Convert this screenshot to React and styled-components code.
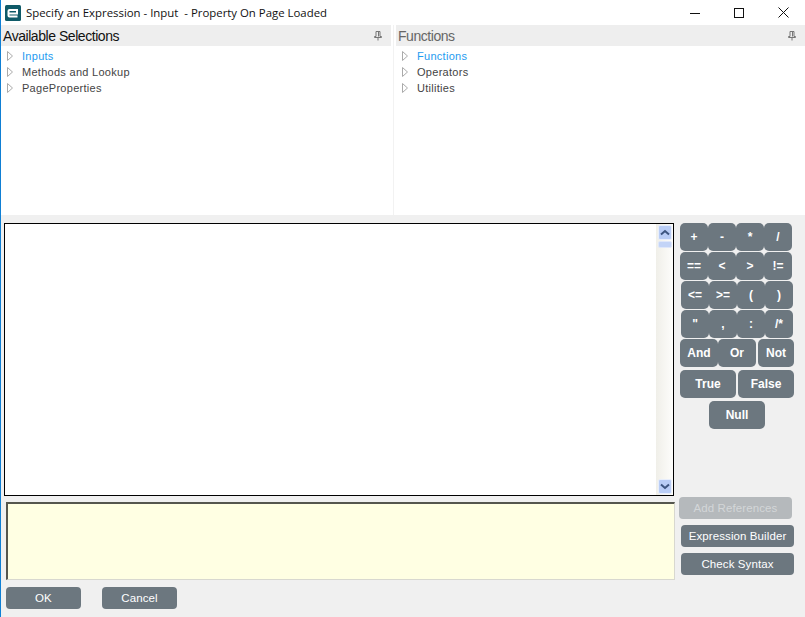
import styled, { createGlobalStyle } from 'styled-components';

const GlobalStyle = createGlobalStyle`
  html, body {
    margin: 0;
    padding: 0;
    background: #f0f0f0;
    overflow: hidden;
  }
`;

const Window = styled.div`
  width: 805px;
  height: 617px;
  box-sizing: border-box;
  border-left: 1px solid #0f7fd4;
  display: flex;
  flex-direction: column;
  background: #f0f0f0;
  font-family: 'Liberation Sans', Arial, sans-serif;
`;

const TitleBar = styled.div`
  height: 25px;
  flex: none;
  display: flex;
  align-items: center;
  background: #fff;
  padding-left: 4px;
`;

const AppLogo = styled.svg`
  width: 16px;
  height: 16px;
  margin-right: 5px;
`;

const TitleText = styled.span`
  flex: 1;
  font-family: 'Open Sans', sans-serif;
  font-size: 11.4px;
  color: #111;
  white-space: pre;
`;

const WindowButton = styled.button`
  width: 44px;
  height: 25px;
  padding: 0;
  border: none;
  background: transparent;
  display: flex;
  align-items: center;
  justify-content: center;
`;

const Panels = styled.div`
  height: 190px;
  flex: none;
  display: flex;
  background: #fff;
`;

const Panel = styled.section`
  width: ${(props) => props.$width}px;
  flex: none;
`;

const Splitter = styled.div`
  width: 3px;
  flex: none;
  box-sizing: border-box;
  margin-left: 2px;
  border-left: 1px solid #f2f2f2;
`;

const PanelHeader = styled.header`
  height: 21px;
  display: flex;
  align-items: center;
  justify-content: space-between;
  background: #eeeeee;
  padding: 0 9px 0 2px;
  font-size: 14px;
  letter-spacing: -0.45px;
  color: ${(props) => (props.$muted ? '#666' : '#111')};
`;

const Tree = styled.ul`
  list-style: none;
  margin: 0;
  padding: 2px 0 0 5px;
`;

const TreeRow = styled.li`
  height: 16px;
  display: flex;
  align-items: center;
  gap: 8px;
  font-size: 11px;
  letter-spacing: 0.28px;
  color: ${(props) => (props.$active ? '#1e9bf0' : '#444')};
`;

const Body = styled.div`
  flex: 1;
  display: flex;
  min-height: 0;
`;

const EditorColumn = styled.div`
  width: 674px;
  flex: none;
  padding-top: 8px;
  box-sizing: border-box;
`;

const Editor = styled.div`
  width: 670px;
  height: 273px;
  margin-left: 3px;
  box-sizing: border-box;
  border: 1px solid #000;
  background: #fff;
  display: flex;
  justify-content: flex-end;
`;

const ScrollBar = styled.div`
  width: 17px;
  padding: 1px 1px;
  box-sizing: border-box;
  background: linear-gradient(90deg, #f0efe9, #fdfdfb);
  display: flex;
  flex-direction: column;
  align-items: center;
`;

const ScrollButton = styled.div`
  width: 14px;
  height: 15px;
  flex: none;
  box-sizing: border-box;
  border: 1px solid #e8eefb;
  border-radius: 2px;
  background: #b9cdf6;
  display: flex;
  align-items: center;
  justify-content: center;
  margin-top: ${(props) => (props.$bottom ? 'auto' : '0')};
`;

const ScrollThumb = styled.div`
  width: 14px;
  height: 7px;
  margin-top: 1px;
  box-sizing: border-box;
  border: 1px solid #dfe7fa;
  border-radius: 2px;
  background: #c3d4f7;
`;

const Notes = styled.div`
  width: 669px;
  height: 78px;
  margin: 6px 0 0 5px;
  box-sizing: border-box;
  background: #ffffe3;
  border-style: solid;
  border-width: 2px 1px 1px 2px;
  border-color: #55564e #d8d8d0 #d8d8d0 #55564e;
`;

const SideColumn = styled.div`
  width: 130px;
  height: 360px;
  flex: none;
  padding-top: 8px;
  box-sizing: border-box;
  display: flex;
  flex-direction: column;
`;

const KeyRow = styled.div`
  display: flex;
  margin: ${(props) => props.$top || 0}px 0 0 ${(props) => props.$left || 0}px;
`;

const Key = styled.button`
  width: ${(props) => props.$width || 28}px;
  height: 28px;
  margin-left: ${(props) => props.$gap || 0}px;
  padding: 0;
  border: none;
  border-radius: 5px;
  background: #6c777f;
  color: #fff;
  font-family: inherit;
  font-size: 12px;
  font-weight: bold;
`;

const Actions = styled.div`
  margin-top: auto;
  display: flex;
  flex-direction: column;
  gap: 6px;
`;

const ActionButton = styled.button`
  width: 113px;
  height: 22px;
  padding: 0;
  margin-left: ${(props) => (props.disabled ? 4 : 6)}px;
  border: none;
  border-radius: 4px;
  background: ${(props) => (props.disabled ? '#b5b9bc' : '#6c777f')};
  color: ${(props) => (props.disabled ? '#d3d6d8' : '#fff')};
  font-family: inherit;
  font-size: 11.5px;
  letter-spacing: 0.1px;
`;

const Footer = styled.div`
  height: 37px;
  flex: none;
  box-sizing: border-box;
  padding: 7px 0 0 5px;
  display: flex;
  gap: 21px;
`;

const FooterButton = styled(ActionButton)`
  width: 75px;
  margin-left: 0;
`;

const Expander = () => (
  <svg width="8" height="10" viewBox="0 0 8 10">
    <path d="M1.5 .5 L6.5 5 L1.5 9.5 Z" fill="#fff" stroke="#aaa" />
  </svg>
);

const Pin = () => (
  <svg width="8" height="10" viewBox="0 0 8 10">
    <path d="M2 .5 H6 V5.5 H7.5 V6.5 H.5 V5.5 H2 Z M4 6.5 V9.5 M4.5 1 V5.5" fill="none" stroke="#777" />
  </svg>
);

const Chevron = ({ down }) => (
  <svg width="10" height="7" viewBox="0 0 10 7">
    <path d={down ? 'M1 1.5 L5 5 L9 1.5' : 'M1 5.5 L5 2 L9 5.5'} fill="none" stroke="#3d5580" strokeWidth="2" />
  </svg>
);

const keyRows = [
  { left: 0, top: 0, keys: ['+', '-', '*', '/'] },
  { left: 0, top: 1, keys: ['==', '<', '>', '!='] },
  { left: 1, top: 1, keys: ['<=', '>=', '(', ')'] },
  { left: 1, top: 1, keys: ['"', ',', ':', '/*'] },
];

const leftItems = ['Inputs', 'Methods and Lookup', 'PageProperties'];
const rightItems = ['Functions', 'Operators', 'Utilities'];

function TreeList({ items }) {
  return (
    <Tree>
      {items.map((item, i) => (
        <TreeRow key={item} $active={i === 0}>
          <Expander />
          {item}
        </TreeRow>
      ))}
    </Tree>
  );
}

export default function App() {
  return (
    <Window>
      <GlobalStyle />
      <TitleBar>
        <AppLogo viewBox="0 0 16 16">
          <rect width="16" height="16" rx="1.5" fill="#0f5a68" />
          <path d="M3.5 8.5 H12 V5 H4.5 Q3.5 5 3.5 6 V10.5 Q3.5 11.5 4.5 11.5 H12.5" fill="none" stroke="#fff" strokeWidth="2" />
        </AppLogo>
        <TitleText>Specify an Expression - Input  - Property On Page Loaded</TitleText>
        <WindowButton aria-label="Minimize">
          <svg width="10" height="10" viewBox="0 0 10 10">
            <path d="M0 5.5 H10" stroke="#111" />
          </svg>
        </WindowButton>
        <WindowButton aria-label="Maximize">
          <svg width="10" height="10" viewBox="0 0 10 10">
            <rect x=".5" y=".5" width="9" height="9" fill="none" stroke="#111" />
          </svg>
        </WindowButton>
        <WindowButton aria-label="Close">
          <svg width="11" height="11" viewBox="0 0 11 11">
            <path d="M.5 .5 L10.5 10.5 M10.5 .5 L.5 10.5" stroke="#111" />
          </svg>
        </WindowButton>
      </TitleBar>

      <Panels>
        <Panel $width={390}>
          <PanelHeader>
            Available Selections
            <Pin />
          </PanelHeader>
          <TreeList items={leftItems} />
        </Panel>
        <Splitter />
        <Panel $width={409}>
          <PanelHeader $muted>
            Functions
            <Pin />
          </PanelHeader>
          <TreeList items={rightItems} />
        </Panel>
      </Panels>

      <Body>
        <EditorColumn>
          <Editor>
            <ScrollBar>
              <ScrollButton>
                <Chevron />
              </ScrollButton>
              <ScrollThumb />
              <ScrollButton $bottom>
                <Chevron down />
              </ScrollButton>
            </ScrollBar>
          </Editor>
          <Notes />
        </EditorColumn>
        <SideColumn>
          {keyRows.map((row) => (
            <KeyRow key={row.keys[0]} $left={5 + row.left} $top={row.top}>
              {row.keys.map((k) => (
                <Key key={k}>{k}</Key>
              ))}
            </KeyRow>
          ))}
          <KeyRow $left={5} $top={1}>
            <Key $width={38}>And</Key>
            <Key $width={38}>Or</Key>
            <Key $width={36} $gap={2}>Not</Key>
          </KeyRow>
          <KeyRow $left={5} $top={3}>
            <Key $width={56}>True</Key>
            <Key $width={56} $gap={2}>False</Key>
          </KeyRow>
          <KeyRow $left={34} $top={3}>
            <Key $width={56}>Null</Key>
          </KeyRow>
          <Actions>
            <ActionButton disabled>Add References</ActionButton>
            <ActionButton>Expression Builder</ActionButton>
            <ActionButton>Check Syntax</ActionButton>
          </Actions>
        </SideColumn>
      </Body>

      <Footer>
        <FooterButton>OK</FooterButton>
        <FooterButton>Cancel</FooterButton>
      </Footer>
    </Window>
  );
}
